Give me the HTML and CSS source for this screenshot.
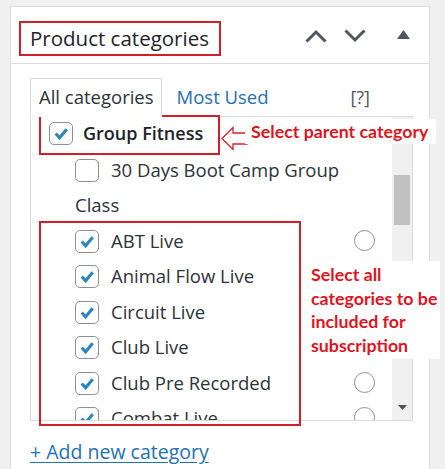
FILE: index.html
```html
<!DOCTYPE html>
<html>
<head>
<meta charset="utf-8">
<link rel="stylesheet" href="styles.css">
</head>
<body>
<div class="stage">
  <div class="panel">
    <div class="ph">
      <h2 class="title">Product categories</h2>
      <div class="hactions">
        <svg class="hicon" width="22" height="14" viewBox="0 0 22 14"><path d="M1.5 12.5 L11 3 L20.5 12.5" fill="none" stroke="#50575e" stroke-width="3"/></svg>
        <svg class="hicon" width="22" height="14" viewBox="0 0 22 14"><path d="M1.5 1.5 L11 11 L20.5 1.5" fill="none" stroke="#50575e" stroke-width="3"/></svg>
        <svg class="htri" width="13" height="9" viewBox="0 0 13 9"><path d="M0 9 L6.5 0 L13 9 Z" fill="#50575e"/></svg>
      </div>
    </div>
    <div class="inside">
      <div class="tabs">
        <span class="tab active">All categories</span>
        <a class="tab link">Most Used</a>
        <span class="help">[?]</span>
      </div>
      <div class="list">
        <ul class="cats">
          <li>
            <div class="row">
              <label class="lbl parent"><span class="cb on"><svg viewBox="0 0 22 22"><path d="M5.5 11 L9.5 15.5 L17 6.5" fill="none" stroke="#2a86c0" stroke-width="3.2"/></svg></span>Group Fitness</label>
              <span class="radio"></span>
            </div>
            <ul class="children">
              <li><div class="row"><label class="lbl"><span class="cb"></span>30 Days Boot Camp Group Class</label></div></li>
              <li><div class="row"><label class="lbl"><span class="cb on"><svg viewBox="0 0 22 22"><path d="M5.5 11 L9.5 15.5 L17 6.5" fill="none" stroke="#2a86c0" stroke-width="3.2"/></svg></span>ABT Live</label><span class="radio"></span></div></li>
              <li><div class="row"><label class="lbl"><span class="cb on"><svg viewBox="0 0 22 22"><path d="M5.5 11 L9.5 15.5 L17 6.5" fill="none" stroke="#2a86c0" stroke-width="3.2"/></svg></span>Animal Flow Live</label><span class="radio"></span></div></li>
              <li><div class="row"><label class="lbl"><span class="cb on"><svg viewBox="0 0 22 22"><path d="M5.5 11 L9.5 15.5 L17 6.5" fill="none" stroke="#2a86c0" stroke-width="3.2"/></svg></span>Circuit Live</label><span class="radio"></span></div></li>
              <li><div class="row"><label class="lbl"><span class="cb on"><svg viewBox="0 0 22 22"><path d="M5.5 11 L9.5 15.5 L17 6.5" fill="none" stroke="#2a86c0" stroke-width="3.2"/></svg></span>Club Live</label><span class="radio"></span></div></li>
              <li><div class="row"><label class="lbl"><span class="cb on"><svg viewBox="0 0 22 22"><path d="M5.5 11 L9.5 15.5 L17 6.5" fill="none" stroke="#2a86c0" stroke-width="3.2"/></svg></span>Club Pre Recorded</label><span class="radio"></span></div></li>
              <li><div class="row"><label class="lbl"><span class="cb on"><svg viewBox="0 0 22 22"><path d="M5.5 11 L9.5 15.5 L17 6.5" fill="none" stroke="#2a86c0" stroke-width="3.2"/></svg></span>Combat Live</label><span class="radio"></span></div></li>
            </ul>
          </li>
        </ul>
        <div class="scrollbar">
          <div class="sb-space"></div>
          <div class="thumb"></div>
          <div class="sb-fill"></div>
          <svg class="sb-down" width="9" height="5" viewBox="0 0 9 5"><path d="M0 0 L9 0 L4.5 5 Z" fill="#505050"/></svg>
        </div>
      </div>
      <a class="add">+ Add new category</a>
    </div>
  </div>

  <div class="mark mark-parent"></div>
  <div class="mark mark-children"></div>
  <svg class="arrow" width="28" height="26" viewBox="0 0 28 26"><path d="M1 12.5 L12 1.5 L12 7 L26 7 L26 18 L12 18 L12 23.5 Z" fill="#fff" stroke="#d9202a" stroke-width="1.3"/></svg>
  <div class="note note-parent">Select parent category</div>
  <div class="note note-children">Select all<br>categories to be<br>included for<br>subscription</div>
</div>
</body>
</html>
```
FILE: styles.css
```css
* { box-sizing: border-box; }
html, body { margin: 0; padding: 0; }
body {
  background: #f0f0f1;
  font-family: "Open Sans", "Noto Sans", sans-serif;
  color: #2c3338;
  width: 445px;
  height: 469px;
  overflow: hidden;
}
.stage { position: relative; width: 445px; height: 469px; }

.panel {
  margin: 6px 15px 0 10px;
  height: 463px;
  background: #fff;
  border: 1px solid #dcdcde;
  border-bottom: none;
}
.ph {
  height: 57px;
  border-bottom: 1px solid #dcdcde;
  display: flex;
  align-items: flex-start;
  justify-content: space-between;
}
.title {
  margin: 14px 0 0 8px;
  height: 35px;
  width: 202px;
  border: 2px solid #d2202b;
  font-size: 20.5px;
  font-weight: 500;
  color: #1d2327;
  line-height: 30px;
  padding-left: 9px;
  white-space: nowrap;
}
.hactions {
  display: flex;
  align-items: center;
  margin: 22px 19px 0 0;
}
.hicon { display: block; margin-right: 17px; }
.hicon + .hicon { margin-right: 31px; }
.htri { display: block; margin-top: -4px; }

.inside { padding: 14px 16px 0 19px; }
.tabs {
  display: flex;
  align-items: flex-end;
  height: 38px;
  position: relative;
  z-index: 1;
}
.tab {
  font-size: 18.5px;
  line-height: 36px;
  white-space: nowrap;
}
.tab.active {
  border: 1px solid #dcdcde;
  border-bottom: 1px solid #fff;
  height: 39px;
  margin-bottom: -1px;
  padding: 0 7px 0 8px;
  background: #fff;
  color: #2c3338;
}
.tab.link { color: #2271b1; margin-left: 15px; margin-bottom: 1px; }
.help { color: #50575e; font-size: 18px; line-height: 36px; margin-left: auto; margin-right: 43px; margin-bottom: 1px; }

.list {
  height: 305px;
  border: 1px solid #dcdcde;
  display: flex;
  overflow: hidden;
}
.cats, .children { list-style: none; margin: 0; padding: 0; }
.cats { flex: 1; padding: 0 18px 0 18px; margin-top: -1px; }
.children { padding-left: 26px; }
.row { display: flex; align-items: flex-start; }
.lbl {
  flex: 1;
  font-size: 18.5px;
  line-height: 35.5px;
  color: #2c3338;
  padding-right: 40px;
}
.children .lbl { padding-right: 4px; }
.lbl.parent { font-weight: 600; font-size: 18px; color: #1d2327; }
.cb {
  display: inline-block;
  width: 24px;
  height: 23px;
  border: 1px solid #8c8f94;
  border-radius: 5px;
  vertical-align: middle;
  margin: -3px 12px 0 0;
  background: #fff;
}
.parent .cb { margin-right: 10px; }
.cb svg { display: block; width: 22px; height: 21px; }
.radio {
  flex: none;
  width: 21px;
  height: 21px;
  border: 1px solid #8c8f94;
  border-radius: 50%;
  margin-top: 7px;
  margin-right: -1px;
}

.scrollbar {
  flex: none;
  width: 20px;
  background: #f0f0f0;
  display: flex;
  flex-direction: column;
  align-items: center;
}
.sb-space { height: 58px; }
.thumb { width: 16px; height: 50px; background: #c1c1c1; }
.sb-fill { flex: 1; }
.sb-down { display: block; margin-bottom: 10px; }

.add {
  display: inline-block;
  margin-top: 17px;
  font-size: 19.5px;
  color: #2271b1;
  text-decoration: underline;
  text-underline-offset: 3px;
}

.mark { position: absolute; border: 2px solid #d2202b; }
.mark-parent { left: 39px; top: 109px; width: 181px; height: 40px; }
.mark-children { left: 39px; top: 215px; width: 262px; height: 205px; }
.arrow { position: absolute; left: 221px; top: 120px; }
.note {
  position: absolute;
  background: #fff;
  color: #e0141e;
  font-family: "Lato", "Open Sans", sans-serif;
  font-weight: 700;
  font-size: 17.8px;
  white-space: nowrap;
}
.note-parent { left: 245px; top: 113px; width: 191px; height: 25px; line-height: 25px; padding-left: 6px; }
.note-children { left: 302px; top: 255px; width: 138px; height: 98px; line-height: 23.5px; padding: 2px 0 0 9px; }
```
